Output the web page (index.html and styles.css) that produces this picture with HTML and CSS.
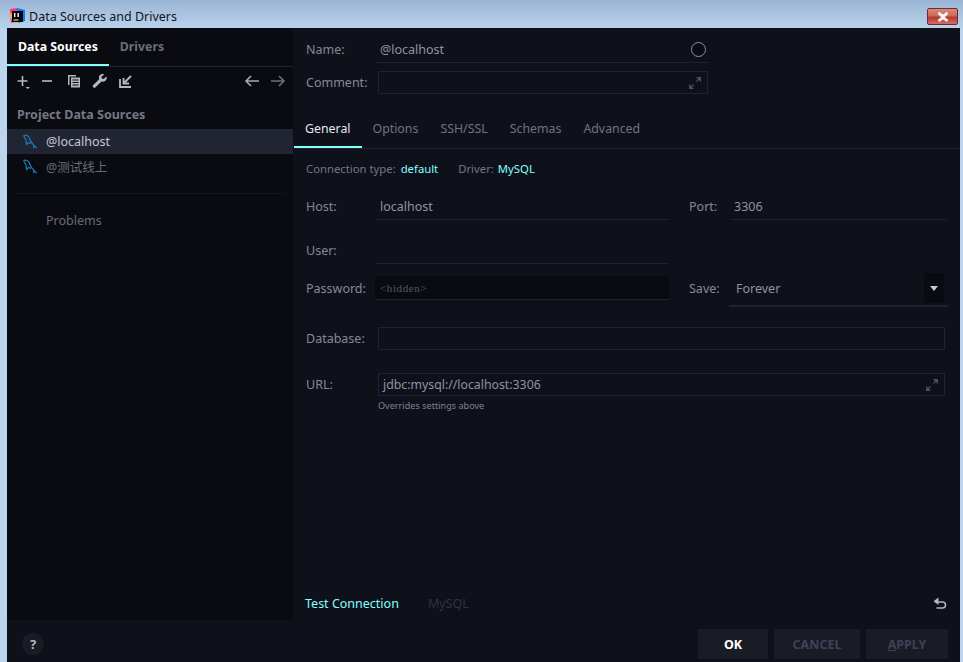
FILE: index.html
```html
<!DOCTYPE html>
<html lang="en">
<head>
<meta charset="utf-8">
<title>Data Sources and Drivers</title>
<link rel="stylesheet" href="styles.css">
</head>
<body>
<div class="window">
  <header class="titlebar">
    <svg class="app-icon" width="16" height="16" viewBox="0 0 16 16">
      <path d="M1 1 L8 0 L8 14 L2 15 Z" fill="#ff318c"/>
      <path d="M8 0 L16 2 L16 13 L9 15 Z" fill="#087cfa"/>
      <path d="M0 7 L5 15 L10 15 L3 5 Z" fill="#fdb60d"/>
      <rect x="3" y="3" width="11" height="11" fill="#000"/>
      <rect x="4.5" y="11.5" width="5" height="1" fill="#fff"/>
      <rect x="5" y="5" width="1.4" height="4" fill="#fff"/>
      <rect x="8.5" y="5" width="1.4" height="4" fill="#fff"/>
    </svg>
    <span class="title-text">Data Sources and Drivers</span>
    <button class="close-btn" type="button" aria-label="Close">
      <svg width="14" height="10" viewBox="0 0 14 10"><path d="M2.5 1 L7 4 L11.5 1 M2.5 9 L7 6 L11.5 9 M2.5 1 L11.5 9 M11.5 1 L2.5 9" stroke="#f4f4f8" stroke-width="2.4" fill="none"/></svg>
    </button>
  </header>

  <div class="frame">
    <div class="main">
      <aside class="sidebar">
        <nav class="side-tabs">
          <a class="side-tab active">Data Sources</a>
          <a class="side-tab">Drivers</a>
        </nav>
        <div class="toolbar">
          <div class="tool-group">
            <svg class="tool tool-plus" width="16" height="16" viewBox="0 0 16 16"><path d="M7.500 3V13M2.500 8H12.500" stroke="#b4b7c2" stroke-width="1.6"/><path d="M10.5 14H15L12.7 16Z" fill="#b4b7c2"/></svg>
            <svg class="tool tool-minus" width="16" height="16" viewBox="0 0 16 16"><path d="M3 8H13" stroke="#b4b7c2" stroke-width="1.6"/></svg>
            <svg class="tool" width="16" height="16" viewBox="0 0 16 16"><path d="M2 2H10V3.5H3.5V12H2Z" fill="#b4b7c2"/><path d="M5 4.5H14V14.5H5Z" fill="#b4b7c2"/><path d="M6.5 7H12.500M6.500 9.500H12.500M6.500 12H12.500" stroke="#0a0b10" stroke-width="1"/></svg>
            <svg class="tool" width="16" height="16" viewBox="0 0 16 16"><path d="M14.500 3.500L11.500 6L9.800 5.600L9.500 3.800L12.300 1.200C10.500 .5 8.500 1 7.500 2.500C6.700 3.700 6.800 5 7.200 6.300L1.200 12C.6 12.600 .6 13.600 1.200 14.300C1.900 15 2.900 15 3.600 14.300L9.500 8.600C10.900 9 12.500 8.800 13.600 7.600C14.700 6.500 15 5 14.500 3.500Z" fill="#b4b7c2"/></svg>
            <svg class="tool" width="16" height="16" viewBox="0 0 16 16"><path d="M2 6V14H13" stroke="#b4b7c2" stroke-width="1.8" fill="none"/><path d="M13 3L6 10M5.500 5V10.500H11" stroke="#b4b7c2" stroke-width="1.800" fill="none"/></svg>
          </div>
          <div class="tool-group nav-group">
            <svg class="tool" width="16" height="16" viewBox="0 0 16 16"><path d="M15 8H2M7 3L2 8L7 13" stroke="#a6a9b5" stroke-width="1.600" fill="none"/></svg>
            <svg class="tool" width="16" height="16" viewBox="0 0 16 16"><path d="M1 8H14M9 3L14 8L9 13" stroke="#6b6e7a" stroke-width="1.600" fill="none"/></svg>
          </div>
        </div>
        <h2 class="side-heading">Project Data Sources</h2>
        <ul class="source-list">
          <li class="source selected">
            <svg class="dolphin" width="14" height="15" viewBox="0 0 14 15"><path d="M.5 1.500C3 .5 5.500 1.500 6.500 4.500C7.300 7 8.500 9 11 11.500L13.500 14M11 11.500L10.500 14M.5 1.500L3 6L3.500 10.500L5.500 8.500L8 9.500" stroke="#1d7fb8" stroke-width="1.200" fill="none"/></svg>
            <span>@localhost</span>
          </li>
          <li class="source">
            <svg class="dolphin" width="14" height="15" viewBox="0 0 14 15"><path d="M.5 1.500C3 .5 5.500 1.500 6.500 4.500C7.300 7 8.500 9 11 11.500L13.500 14M11 11.500L10.500 14M.5 1.500L3 6L3.500 10.500L5.500 8.500L8 9.500" stroke="#1d7fb8" stroke-width="1.200" fill="none"/></svg>
            <span class="dim-name">@测试线上</span>
          </li>
        </ul>
        <hr class="side-sep">
        <div class="problems">Problems</div>
      </aside>

      <section class="content">
        <div class="row name-row">
          <label class="label">Name:</label>
          <div class="underline-field name-field"><span>@localhost</span><span class="circle"></span></div>
        </div>
        <div class="row comment-row">
          <label class="label">Comment:</label>
          <div class="box comment-box">
            <svg class="expand" width="14" height="14" viewBox="0 0 14 14"><path d="M8 1H13V6ZM1 13V8L6 13Z" fill="#4d505c"/><path d="M12 2L8.500 5.500M2 12L5.500 8.500" stroke="#4d505c" stroke-width="1.200"/></svg>
          </div>
        </div>

        <nav class="tabs">
          <a class="tab active">General</a>
          <a class="tab">Options</a>
          <a class="tab">SSH/SSL</a>
          <a class="tab">Schemas</a>
          <a class="tab">Advanced</a>
        </nav>

        <div class="conn-row">
          <span>Connection type:</span><a class="link conn-default">default</a>
          <span class="conn-driver">Driver:</span><a class="link">MySQL</a>
        </div>

        <div class="row host-row">
          <label class="label">Host:</label>
          <div class="underline-field wide"><span>localhost</span></div>
          <label class="label side-label">Port:</label>
          <div class="underline-field port-field"><span>3306</span></div>
        </div>
        <div class="row user-row">
          <label class="label">User:</label>
          <div class="underline-field wide"></div>
        </div>
        <div class="row pass-row">
          <label class="label">Password:</label>
          <div class="pass-field"><span>&lt;hidden&gt;</span></div>
          <label class="label save-label">Save:</label>
          <div class="combo">
            <span class="combo-value">Forever</span>
            <span class="combo-arrow"><i></i></span>
          </div>
        </div>
        <div class="row db-row">
          <label class="label">Database:</label>
          <div class="box long-box"></div>
        </div>
        <div class="row url-row">
          <label class="label">URL:</label>
          <div class="box long-box url-box">
            <span class="url-value">jdbc:mysql://localhost:3306</span>
            <svg class="expand" width="14" height="14" viewBox="0 0 14 14"><path d="M8 1H13V6ZM1 13V8L6 13Z" fill="#4d505c"/><path d="M12 2L8.500 5.500M2 12L5.500 8.500" stroke="#4d505c" stroke-width="1.200"/></svg>
          </div>
        </div>
        <p class="hint">Overrides settings above</p>

        <div class="content-foot">
          <a class="link test">Test Connection</a>
          <span class="foot-driver">MySQL</span>
          <svg class="undo" width="16" height="16" viewBox="0 0 16 16"><path d="M4 7H10.500C12.500 7 13.500 8.300 13.500 10C13.500 11.700 12.500 13 10.500 13H4.500" stroke="#b4b7c2" stroke-width="1.500" fill="none"/><path d="M6.500 2.500V10L1.500 6.300Z" fill="#b4b7c2"/></svg>
        </div>
      </section>
    </div>

    <footer class="footer">
      <span class="help">?</span>
      <div class="buttons">
        <button class="btn ok" type="button">OK</button>
        <button class="btn cancel" type="button">CANCEL</button>
        <button class="btn apply" type="button"><u>A</u>PPLY</button>
      </div>
    </footer>
  </div>
</div>
</body>
</html>
```
FILE: styles.css
```css
* { box-sizing: border-box; }
html, body { margin: 0; padding: 0; height: 100%; overflow: hidden; }
body {
  font-family: "Noto Sans", "Noto Sans CJK SC", sans-serif;
  font-size: 12.500px;
  color: #8f93a2;
  background: #bcd4ee;
}
a { cursor: pointer; }
.window { display: flex; flex-direction: column; height: 662px; }

.titlebar {
  height: 28px;
  display: flex;
  align-items: center;
  padding: 3px 5px 0 9px;
  background: linear-gradient(#9ab5d3, #b9d2ec);
}
.app-icon { flex: none; }
.title-text { margin-left: 4px; margin-top: 1px; font-size: 12.500px; color: #10141c; }
.close-btn {
  margin-left: auto;
  margin-top: 2px;
  width: 31px;
  height: 17px;
  padding: 0;
  display: flex;
  align-items: center;
  justify-content: center;
  border: 1px solid #6b2a3a;
  border-radius: 2px;
  background: linear-gradient(#d98a78 0, #cf6a58 45%, #b63a2b 55%, #cf7060 100%);
}

.frame { flex: 1; margin: 0 3px 0 7px; display: flex; flex-direction: column; background: #0f111a; min-height: 0; }
.main { flex: 1; display: flex; min-height: 0; }

.sidebar { width: 286px; flex: none; background: #0a0b10; display: flex; flex-direction: column; }
.side-tabs { display: flex; height: 39px; border-bottom: 1px solid #1f2233; }
.side-tab {
  display: flex; align-items: center;
  padding: 0 11px; height: 38px;
  border-bottom: 2px solid transparent;
  font-weight: 700; font-size: 12.300px; color: #6a6e7c;
}
.side-tab.active { color: #fff; border-bottom-color: #84ffff; }

.toolbar { display: flex; justify-content: space-between; padding: 6px 7px 0 8px; height: 32px; }
.tool-group { display: flex; gap: 10px; }
.tool { display: block; }
.tool-plus { margin-right: -2px; }
.tool-minus { margin-right: 1px; }
.nav-group { gap: 10px; }
.side-heading { margin: 7px 0 0 10px; font-size: 12.500px; line-height: 17px; font-weight: 700; color: #747886; }
.source-list { list-style: none; margin: 6px 0 0; padding: 0; }
.source { height: 25px; display: flex; align-items: center; padding-left: 16px; color: #c6c9d4; }
.source.selected { background: #212433; }
.source span { margin-left: 9px; }
.source .dim-name { color: #686c7a; }
.dolphin { flex: none; }
.side-sep { border: 0; height: 1px; margin: 14px 8px 0 8px; background: #14161f; }
.problems { margin: 18px 0 0 39px; line-height: 18px; color: #686c7a; }

.content { flex: 1; display: flex; flex-direction: column; min-width: 0; }
.row { display: flex; padding-left: 13px; }
.label { flex: none; width: 70px; line-height: 18px; color: #858997; }

.name-row { margin-top: 9px; height: 26px; align-items: center; }
.underline-field { height: 100%; display: flex; align-items: center; padding-left: 4px; border-bottom: 1px solid #1f2233; color: #8f93a2; }
.name-field { width: 334px; justify-content: space-between; padding-right: 4px; }
.circle { width: 15px; height: 15px; border-radius: 50%; border: 1px solid #8f93a2; background: #0a0b10; }
.box { border: 1px solid #1f2233; display: flex; align-items: center; justify-content: space-between; margin-left: 2px; }
.comment-row { margin-top: 8px; height: 23px; align-items: center; }
.comment-box { width: 330px; height: 23px; justify-content: flex-end; padding-right: 5px; }

.tabs { display: flex; margin-top: 16px; height: 39px; padding-left: 1px; border-bottom: 1px solid #1f2233; font-size: 12.350px; }
.tab { display: flex; align-items: center; height: 38px; padding: 0 11px; border-bottom: 2px solid transparent; color: #6f7380; }
.tab.active { color: #e4e6ee; border-bottom-color: #84ffff; }

.conn-row { display: flex; margin-top: 10px; height: 18px; align-items: center; padding-left: 13px; font-size: 11.300px; color: #737785; }
.link { color: #84ffff; }
.conn-default { margin-left: 5px; }
.conn-driver { margin-left: 20px; margin-right: 4px; }

.host-row { margin-top: 17px; height: 26px; align-items: center; }
.wide { width: 292px; }
.side-label { margin-left: 21px; width: 41px; }
.port-field { width: 217px; }
.user-row { margin-top: 18px; height: 26px; align-items: center; }
.pass-row { margin-top: 9px; height: 34px; align-items: flex-start; }
.pass-row .label { margin-top: 7px; }
.pass-field {
  width: 294px; height: 24px; margin-left: -1px; margin-top: 3px;
  padding-left: 5px;
  display: flex; align-items: center;
  background: #0a0b10; border-bottom: 1px solid #1f2233;
  font-family: "Liberation Serif", serif; font-size: 11px; letter-spacing: .6px; color: #565a6a;
}
.pass-row .save-label { margin-left: 20px; width: 40px; }
.combo {
  width: 219px; height: 34px;
  display: flex; align-items: flex-start; justify-content: space-between;
  padding: 0 4px 0 7px;
  border-bottom: 2px solid #1f2233;
  color: #8f93a2;
}
.combo-value { margin-top: 7px; line-height: 18px; }
.combo-arrow { width: 20px; height: 30px; background: #0a0b10; display: flex; align-items: center; justify-content: center; }
.combo-arrow i { display: block; border: 4px solid transparent; border-top: 5px solid #c6c9d4; border-bottom: 0; }
.db-row { margin-top: 20px; height: 23px; align-items: center; }
.long-box { width: 567px; height: 23px; }
.url-row { margin-top: 23px; height: 23px; align-items: center; }
.url-box { padding: 0 5px 0 4px; }
.url-value { font-size: 12.300px; }
.hint { margin: 3px 0 0 85px; font-size: 9.100px; line-height: 13px; color: #7e828f; }

.content-foot { margin-top: auto; height: 32px; display: flex; align-items: center; padding: 0 12px 2px 12px; }
.foot-driver { margin-left: 29px; color: #2f3242; }
.undo { margin-left: auto; }

.footer { height: 42px; flex: none; display: flex; align-items: flex-start; justify-content: space-between; padding: 9px 12px 0 15px; }
.help {
  width: 22px; height: 22px; margin-top: 4px; border-radius: 50%;
  background: #1a1c25; color: #b4b7c2;
  display: flex; align-items: center; justify-content: center;
  font-weight: 700; font-size: 13px;
}
.buttons { display: flex; gap: 6px; }
.btn {
  height: 30px; border: 0; padding: 0;
  background: #1a1c25;
  font-family: inherit; font-size: 12.500px; font-weight: 700;
  color: #3d4256;
}
.ok { width: 70px; color: #fff; }
.cancel { width: 86px; }
.apply { width: 82px; }
```
